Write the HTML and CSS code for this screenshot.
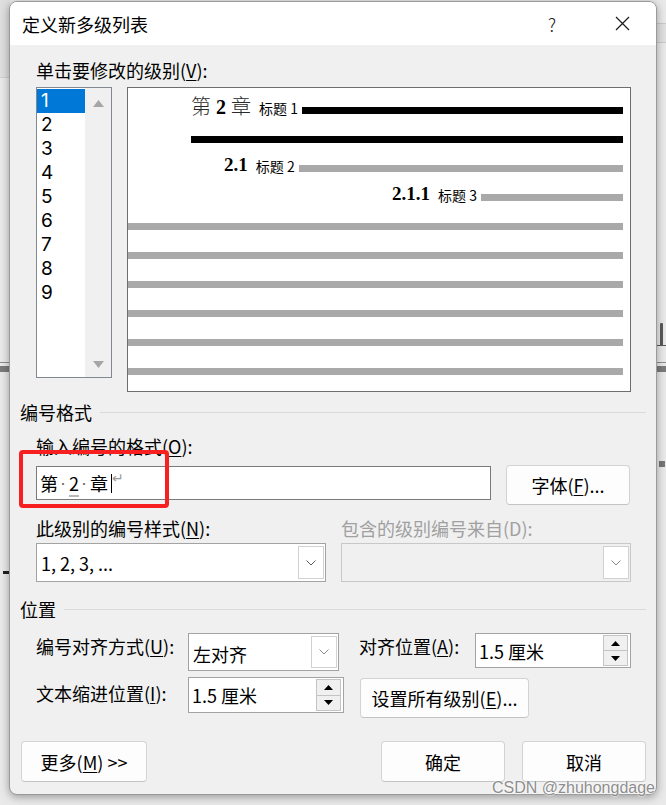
FILE: index.html
```html
<!DOCTYPE html>
<html lang="zh-CN">

<head>
    <meta charset="UTF-8">
    <meta name="viewport" content="width=device-width, initial-scale=1.0">
    <title>定义新多级列表</title>
    <link rel="stylesheet" href="styles.css">
</head>

<body>
    <!-- 对话框后面露出来的 Word 文档边角 -->
    <div class="bg-top-left"></div>
    <div class="bg-top-right"></div>
    <div class="bg-rule left"></div>
    <div class="bg-rule right"></div>
    <div class="bg-dash"></div>
    <div class="bg-square"></div>
    <div class="bg-stem"></div>

    <div class="dialog">
        <div class="titlebar">
            <div class="title">定义新多级列表</div>
            <div class="help">?</div>
            <div class="close">
                <svg width="15" height="15" viewBox="0 0 15 15">
                    <path d="M1 1 L14 14 M14 1 L1 14" stroke="#1a1a1a" stroke-width="1.2" fill="none" />
                </svg>
            </div>
        </div>

        <div class="main">
            <div class="label first indent">单击要修改的级别(<u>V</u>):</div>

            <div class="level-row indent">
                <div class="levels">
                    <div class="level-items">
                        <div class="level on">1</div>
                        <div class="level">2</div>
                        <div class="level">3</div>
                        <div class="level">4</div>
                        <div class="level">5</div>
                        <div class="level">6</div>
                        <div class="level">7</div>
                        <div class="level">8</div>
                        <div class="level">9</div>
                    </div>
                    <div class="vscroll">
                        <svg width="11" height="7" viewBox="0 0 11 7"><path d="M5.5 0 L11 7 L0 7 Z" fill="#a6a6a6" /></svg>
                        <svg width="11" height="7" viewBox="0 0 11 7"><path d="M0 0 L11 0 L5.5 7 Z" fill="#a6a6a6" /></svg>
                    </div>
                </div>

                <div class="preview">
                    <div class="pv-row l1"><span class="pv-num cjk">第 <b>2</b> 章</span><span class="pv-tag">标题 1</span><i class="bar black"></i></div>
                    <div class="pv-row l1"><i class="bar black"></i></div>
                    <div class="pv-row l2"><b class="pv-num">2.1</b><span class="pv-tag">标题 2</span><i class="bar"></i></div>
                    <div class="pv-row l3"><b class="pv-num">2.1.1</b><span class="pv-tag">标题 3</span><i class="bar"></i></div>
                    <div class="pv-row"><i class="bar"></i></div>
                    <div class="pv-row"><i class="bar"></i></div>
                    <div class="pv-row"><i class="bar"></i></div>
                    <div class="pv-row"><i class="bar"></i></div>
                    <div class="pv-row"><i class="bar"></i></div>
                    <div class="pv-row"><i class="bar"></i></div>
                </div>
            </div>

            <div class="group">编号格式</div>

            <div class="label fmt indent">输入编号的格式(<u>O</u>):</div>
            <div class="input-row indent">
                <div class="textbox"><span>第</span><span class="sp">·</span><span class="fld">2</span><span class="sp">·</span><span>章</span><span class="caret"></span><span class="para">↵</span></div>
                <div class="btn font-btn">字体(<u>F</u>)...</div>
            </div>

            <div class="labels-row indent">
                <div class="label">此级别的编号样式(<u>N</u>):</div>
                <div class="label disabled">包含的级别编号来自(D):</div>
            </div>
            <div class="combo-row indent">
                <div class="combo">
                    <span class="val">1, 2, 3, ...</span>
                    <span class="drop">
                        <svg width="10" height="6" viewBox="0 0 10 6"><path d="M0.5 0.5 L5 5 L9.5 0.5" fill="none" stroke="#5f5f5f" /></svg>
                    </span>
                </div>
                <div class="combo off">
                    <span class="val"></span>
                    <span class="drop">
                        <svg width="10" height="6" viewBox="0 0 10 6"><path d="M0.5 0.5 L5 5 L9.5 0.5" fill="none" stroke="#8a8a8a" /></svg>
                    </span>
                </div>
            </div>

            <div class="group pos">位置</div>

            <div class="pos-row r1 indent">
                <div class="label">编号对齐方式(<u>U</u>):</div>
                <div class="combo align-combo">
                    <span class="val">左对齐</span>
                    <span class="drop">
                        <svg width="10" height="6" viewBox="0 0 10 6"><path d="M0.5 0.5 L5 5 L9.5 0.5" fill="none" stroke="#8a8a8a" /></svg>
                    </span>
                </div>
                <div class="label at">对齐位置(<u>A</u>):</div>
                <div class="spin">
                    <span class="val">1.5 厘米</span>
                    <span class="spinner">
                        <span><svg width="9" height="5" viewBox="0 0 9 5"><path d="M4.5 0 L9 5 L0 5 Z" fill="#000" /></svg></span>
                        <span><svg width="9" height="5" viewBox="0 0 9 5"><path d="M0 0 L9 0 L4.5 5 Z" fill="#000" /></svg></span>
                    </span>
                </div>
            </div>

            <div class="pos-row r2 indent">
                <div class="label">文本缩进位置(<u>I</u>):</div>
                <div class="spin tall">
                    <span class="val">1.5 厘米</span>
                    <span class="spinner">
                        <span><svg width="9" height="5" viewBox="0 0 9 5"><path d="M4.5 0 L9 5 L0 5 Z" fill="#000" /></svg></span>
                        <span><svg width="9" height="5" viewBox="0 0 9 5"><path d="M0 0 L9 0 L4.5 5 Z" fill="#000" /></svg></span>
                    </span>
                </div>
                <div class="btn all-btn">设置所有级别(<u>E</u>)...</div>
            </div>

            <div class="footer">
                <div class="btn more">更多(<u>M</u>) &gt;&gt;</div>
                <div class="ok-group">
                    <div class="btn">确定</div>
                    <div class="btn">取消</div>
                </div>
            </div>
        </div>
    </div>

    <!-- 截图上的红框标注和水印 -->
    <div class="mark"></div>
    <div class="watermark">CSDN @zhuhongdage</div>
</body>

</html>
```

FILE: styles.css
```css
* {
    box-sizing: border-box;
}

body {
    margin: 0;
    width: 666px;
    height: 805px;
    overflow: hidden;
    position: relative;
    background-color: #e9e9e9;
    font-family: "Noto Sans CJK SC", "Microsoft YaHei UI", sans-serif;
    font-size: 18px;
    color: #000;
}

u {
    text-decoration-thickness: 1px;
    text-underline-offset: 2px;
}

/* 背景碎片 */
.bg-top-left {
    position: absolute;
    left: 0;
    top: 0;
    width: 10px;
    height: 78px;
    background-color: #dedede;
    border-bottom: 1px solid #cfcfcf;
}

.bg-top-right {
    position: absolute;
    right: 0;
    top: 23px;
    width: 10px;
    height: 20px;
    background-color: #e0e0e0;
    border-top: 1px solid #cacaca;
    border-bottom: 1px solid #cacaca;
}

.bg-rule {
    position: absolute;
    top: 362px;
    width: 10px;
    height: 10px;
    border-top: 1px solid #8c8c8c;
    border-bottom: 6px solid #7c7c7c;
}

.bg-rule.left {
    left: 0;
}

.bg-rule.right {
    right: 0;
}

.bg-dash {
    position: absolute;
    left: 3px;
    top: 571px;
    width: 7px;
    height: 3px;
    background-color: #222;
}

.bg-square {
    position: absolute;
    right: 1px;
    top: 461px;
    width: 6px;
    height: 6px;
    background-color: #777;
}

/* 文档里被挡住的大号数字，只露出一截竖笔 */
.bg-stem {
    position: absolute;
    left: 660px;
    top: 323px;
    width: 3px;
    height: 23px;
    background-color: #5a5a5a;
    border-radius: 1px 1px 0 0;
}

.bg-stem::after {
    content: "";
    position: absolute;
    left: -3px;
    bottom: 0;
    width: 9px;
    height: 1px;
    background-color: #5a5a5a;
}

/* 对话框 */
.dialog {
    position: relative;
    z-index: 1;
    width: 648px;
    height: 794px;
    margin: 1px 0 0 9px;
    border: 1px solid #9a9a9a;
    border-radius: 8px;
    background-color: #f0f0f0;
    box-shadow: 0 2px 9px rgba(0, 0, 0, 0.35);
    overflow: hidden;
}

.titlebar {
    height: 43px;
    background-color: #fff;
    display: flex;
    align-items: center;
    padding: 0 11px 0 12px;
}

.title {
    flex: 1;
    line-height: 24px;
}

.help,
.close {
    width: 46px;
    height: 43px;
    display: flex;
    justify-content: center;
    align-items: center;
}

.help {
    margin-right: 24px;
    font-weight: 300;
    color: #222;
}

.main {
    padding: 0 10px;
    display: flex;
    flex-direction: column;
}

.indent {
    margin-left: 16px;
    margin-right: 15px;
}

.label {
    line-height: 24px;
    white-space: nowrap;
}

.label.first {
    margin-top: 13px;
}

.disabled {
    color: #a0a0a0;
}

/* 级别列表 + 预览 */
.level-row {
    margin-top: 5px;
    height: 305px;
    display: flex;
    align-items: flex-start;
}

.levels {
    width: 76px;
    height: 291px;
    border: 1px solid #828790;
    background-color: #fff;
    display: flex;
}

.level-items {
    width: 48px;
    padding-top: 1px;
}

.level {
    height: 24px;
    line-height: 24px;
    font-family: Inter, "Noto Sans", sans-serif;
    font-size: 19px;
    padding-left: 4px;
}

.level.on {
    background-color: #0078d7;
    color: #fff;
}

.vscroll {
    width: 26px;
    background-color: #f0f0f0;
    display: flex;
    flex-direction: column;
    justify-content: space-between;
    align-items: center;
    padding: 12px 0 9px;
}

.vscroll svg {
    display: block;
}

.preview {
    margin-left: 15px;
    width: 504px;
    height: 305px;
    border: 1px solid #6e6e6e;
    background-color: #fff;
    padding: 5px 7px 8px 0;
}

.pv-row {
    height: 29px;
    display: flex;
    align-items: flex-end;
}

.pv-row.l1 {
    padding-left: 63px;
}

.pv-row.l2 {
    padding-left: 96px;
}

.pv-row.l3 {
    padding-left: 264px;
}

.bar {
    flex: 1;
    height: 7px;
    margin-bottom: 8px;
    background-color: #a9a9a9;
}

.bar.black {
    background-color: #000;
}

.pv-num {
    font-family: "Liberation Serif", "Noto Sans CJK SC", serif;
    font-size: 19px;
    line-height: 20px;
    margin-bottom: 5px;
    white-space: pre;
}

.pv-num.cjk {
    font-size: 20px;
    font-weight: 300;
    color: #2a2a2a;
}

.pv-num.cjk b {
    color: #000;
    font-weight: 700;
}

.pv-tag {
    font-size: 14px;
    line-height: 14px;
    margin: 0 4px 7px 8px;
    white-space: pre;
}

/* 分组标题 */
.group {
    display: flex;
    align-items: center;
    line-height: 24px;
    margin-top: 8px;
}

.group::after {
    content: "";
    flex: 1;
    height: 1px;
    margin-left: 8px;
    background-color: #dadada;
}

.group.pos {
    margin-top: 15px;
}

/* 编号格式 */
.label.fmt {
    margin-top: 10px;
}

.input-row {
    margin-top: 7px;
    height: 40px;
    display: flex;
}

.textbox {
    width: 455px;
    height: 34px;
    margin-top: 1px;
    border: 1px solid #7a7a7a;
    background-color: #fff;
    padding-left: 3px;
    display: flex;
    align-items: center;
    line-height: 24px;
    white-space: pre;
}

.textbox .sp {
    width: 11px;
    padding-left: 2px;
    overflow: hidden;
    font-family: "Liberation Sans", sans-serif;
    color: #666;
}

.textbox .fld {
    text-decoration: underline;
    text-decoration-color: #b8b8b8;
    text-decoration-thickness: 2px;
    text-underline-offset: 4px;
}

.caret {
    width: 1px;
    height: 19px;
    margin-left: 3px;
    background-color: #000;
}

.para {
    font-family: "DejaVu Sans", sans-serif;
    font-size: 14px;
    line-height: 14px;
    color: #9a9a9a;
    align-self: flex-start;
    margin-top: 4px;
}

.btn {
    height: 40px;
    border: 1px solid #d3d3d3;
    border-bottom-color: #c4c4c4;
    border-radius: 4px;
    background-color: #fdfdfd;
    display: flex;
    justify-content: center;
    align-items: center;
    white-space: nowrap;
}

.font-btn {
    width: 124px;
    margin-left: 15px;
}

.labels-row {
    margin-top: 11px;
    display: flex;
}

.labels-row .label:first-child {
    width: 305px;
}

.combo-row {
    margin-top: 3px;
    display: flex;
    gap: 15px;
}

.combo {
    height: 39px;
    border: 1px solid #a3a3a3;
    background-color: #fff;
    display: flex;
    align-items: center;
}

.combo-row .combo {
    width: 290px;
}

.combo .val {
    flex: 1;
    padding-left: 4px;
    white-space: pre;
}

.drop {
    width: 26px;
    align-self: stretch;
    margin: 2px 1px 2px 0;
    border: 1px solid #d2d2d2;
    background-color: #fff;
    display: flex;
    justify-content: center;
    align-items: center;
}

.combo.off {
    background-color: #f0f0f0;
    border-color: #c8c8c8;
}

/* 位置 */
.pos-row {
    display: flex;
    align-items: flex-start;
}

.pos-row.r1 {
    margin-top: 12px;
    height: 38px;
}

.pos-row.r2 {
    margin-top: 6px;
    height: 41px;
}

.pos-row .label {
    width: 152px;
    margin-top: 1px;
}

.pos-row.r2 .label {
    margin-top: 4px;
}

.pos-row .label.at {
    width: 116px;
    margin-left: 20px;
}

.align-combo {
    width: 151px;
    height: 38px;
}

.align-combo .val {
    padding-top: 4px;
}

.spin {
    width: 156px;
    height: 35px;
    border: 1px solid #a3a3a3;
    background-color: #fff;
    display: flex;
    align-items: center;
}

.spin.tall {
    height: 36px;
}

.spin .val {
    flex: 1;
    padding-left: 3px;
    white-space: pre;
}

.spinner {
    width: 25px;
    align-self: stretch;
    margin: 1px 2px 1px 0;
    display: flex;
    flex-direction: column;
}

.spinner span {
    flex: 1;
    border: 1px solid #c4c4c4;
    background-color: #f0f0f0;
    display: flex;
    justify-content: center;
    align-items: center;
}

.spinner span+span {
    margin-top: -1px;
}

.all-btn {
    width: 169px;
    margin: 1px 0 0 16px;
}

/* 底部按钮 */
.footer {
    margin-top: 23px;
    padding-left: 1px;
    display: flex;
    justify-content: space-between;
}

.footer .btn {
    height: 41px;
}

.more {
    width: 126px;
}

.ok-group {
    display: flex;
    gap: 17px;
}

.ok-group .btn {
    width: 124px;
}

/* 标注 */
.mark {
    position: absolute;
    z-index: 2;
    left: 19px;
    top: 450px;
    width: 150px;
    height: 58px;
    border: 4px solid #f71f1f;
    border-radius: 4px;
}

.watermark {
    position: absolute;
    z-index: 2;
    left: 492px;
    top: 777px;
    font-family: "Liberation Sans", sans-serif;
    font-size: 16px;
    line-height: 22px;
    color: #8e8e8e;
    text-shadow: 0 0 2px #fff, 0 0 2px #fff;
}
```
